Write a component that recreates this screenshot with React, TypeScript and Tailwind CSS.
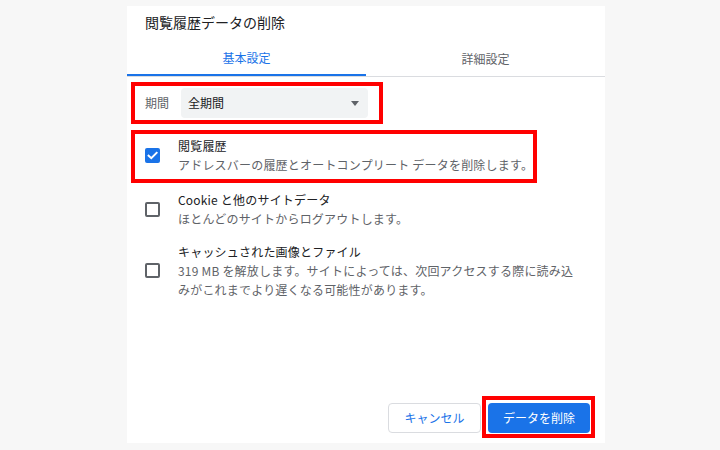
import React from "react";

const font = "font-['Noto_Sans_CJK_JP','Noto_Sans',sans-serif]";

function Check({ checked }: { checked?: boolean }) {
  if (checked) {
    return (
      <div className="w-[15px] h-[15px] shrink-0 rounded-[2px] bg-[#1a73e8] flex items-center justify-center">
        <svg width="15" height="15" viewBox="0 0 15 15">
          <path d="M3.6 7.6 L6.3 10.2 L11.6 4.8" fill="none" stroke="#ffffff" strokeWidth="2" strokeLinecap="square" />
        </svg>
      </div>
    );
  }
  return <div className="w-[15px] h-[15px] shrink-0 rounded-[2px] border-2 border-[#5f6368]" />;
}

function Row({
  checked,
  title,
  children,
}: {
  checked?: boolean;
  title: string;
  children: React.ReactNode;
}) {
  return (
    <div className="flex items-center">
      <Check checked={checked} />
      <div className="ml-[18px] text-[12px] leading-[19px] tracking-[0.2px]">
        <div className="text-[#202124]">{title}</div>
        <div className="text-[#5f6368]">{children}</div>
      </div>
    </div>
  );
}

export default function App() {
  return (
    <div className={`w-[720px] h-[450px] bg-[#f7f7f7] pl-[127px] pt-[6px] ${font}`}>
      <div className="w-[478px] h-[437px] bg-white flex flex-col">
        <div className="pl-[18px] pt-[6px] text-[14px] leading-[20px] text-[#202124]">
          閲覧履歴データの削除
        </div>
        <div className="flex h-[45px] border-b border-[#dadce0] text-[12px]">
          <div className="flex-1 flex items-center justify-center pt-[10px] border-b-2 border-[#1a73e8] text-[#1a73e8]">
            基本設定
          </div>
          <div className="flex-1 flex items-center justify-center pt-[10px] text-[#5f6368]">
            詳細設定
          </div>
        </div>

        <div className="px-[18px]">
          <div className="relative mt-[11px] flex items-center">
            <div className="w-[36px] text-[12px] text-[#5f6368]">期間</div>
            <div className="w-[187px] h-[30px] rounded-[4px] bg-[#f1f3f4] flex items-center justify-between pl-[7px] pr-[9px] text-[12px] text-[#202124]">
              <span>全期間</span>
              <span className="w-0 h-0 border-x-[4px] border-t-[5px] border-x-transparent border-t-[#5f6368]" />
            </div>
            <div className="absolute left-[-14px] top-[-6px] w-[252px] h-[42px] border-4 border-[#ff0000]" />
          </div>

          <div className="relative mt-[18px]">
            <Row checked title="閲覧履歴">
              アドレスバーの履歴とオートコンプリート データを削除します。
            </Row>
            <div className="absolute left-[-14px] top-[-6px] w-[406px] h-[53px] border-4 border-[#ff0000]" />
          </div>

          <div className="mt-[16px]">
            <Row title="Cookie と他のサイトデータ">ほとんどのサイトからログアウトします。</Row>
          </div>

          <div className="mt-[14px]">
            <Row title="キャッシュされた画像とファイル">
              319 MB を解放します。サイトによっては、次回アクセスする際に読み込
              <br />
              みがこれまでより遅くなる可能性があります。
            </Row>
          </div>
        </div>

        <div className="flex-1" />

        <div className="flex justify-end gap-[7px] pr-[15px] pb-[10px] text-[12px]">
          <div className="w-[93px] h-[30px] rounded-[4px] border border-[#dadce0] flex items-center justify-center text-[#1a73e8]">
            キャンセル
          </div>
          <div className="relative">
            <div className="w-[102px] h-[30px] rounded-[4px] bg-[#1a73e8] flex items-center justify-center text-white">
              データを削除
            </div>
            <div className="absolute left-[-6px] top-[-7px] w-[113px] h-[42px] border-4 border-[#ff0000]" />
          </div>
        </div>
      </div>
    </div>
  );
}
